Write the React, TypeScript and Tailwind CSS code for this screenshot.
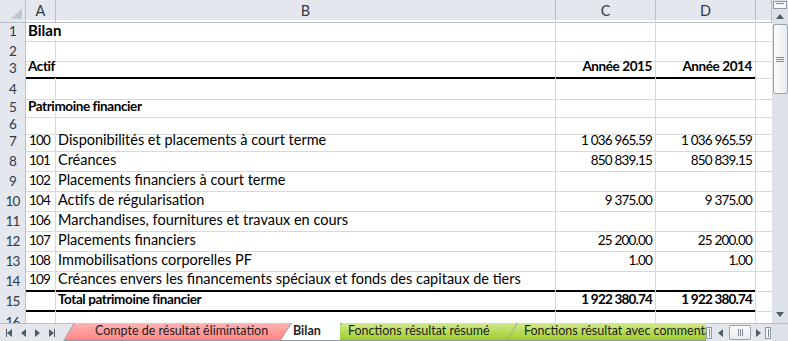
import React from 'react';

type RowDef = {
  n: number;
  h: string;
  a?: string;
  b?: string;
  c?: string;
  d?: string;
  span?: boolean;
  bold?: boolean;
  thick?: boolean;
  big?: boolean;
};

const rows: RowDef[] = [
  { n: 1, h: 'h-[20px]', a: 'Bilan', span: true, bold: true, big: true },
  { n: 2, h: 'h-[17px]' },
  { n: 3, h: 'h-[21px]', a: 'Actif', span: true, c: 'Année 2015', d: 'Année 2014', bold: true, thick: true },
  { n: 4, h: 'h-[18px]' },
  { n: 5, h: 'h-[17px]', a: 'Patrimoine financier', span: true, bold: true },
  { n: 6, h: 'h-[17px]' },
  { n: 7, h: 'h-[20px]', a: '100', b: 'Disponibilités et placements à court terme', c: '1 036 965.59', d: '1 036 965.59' },
  { n: 8, h: 'h-[20px]', a: '101', b: 'Créances', c: '850 839.15', d: '850 839.15' },
  { n: 9, h: 'h-[20px]', a: '102', b: 'Placements financiers à court terme' },
  { n: 10, h: 'h-[20px]', a: '104', b: 'Actifs de régularisation', c: '9 375.00', d: '9 375.00' },
  { n: 11, h: 'h-[20px]', a: '106', b: 'Marchandises, fournitures et travaux en cours' },
  { n: 12, h: 'h-[20px]', a: '107', b: 'Placements financiers', c: '25 200.00', d: '25 200.00' },
  { n: 13, h: 'h-[20px]', a: '108', b: 'Immobilisations corporelles PF', c: '1.00', d: '1.00' },
  { n: 14, h: 'h-[20px]', a: '109', b: 'Créances envers les financements spéciaux et fonds des capitaux de tiers', thick: true },
  { n: 15, h: 'h-[21px]', b: 'Total patrimoine financier', c: '1 922 380.74', d: '1 922 380.74', bold: true, thick: true },
  { n: 16, h: 'h-[20px]' },
];

const grid = 'grid grid-cols-[26px_30px_500px_100px_100px_1fr]';
const cellBase = 'flex items-end pb-[2px] leading-[18px] border-r border-[#d9d9d9] overflow-visible whitespace-nowrap';
// digits in Lato run wider than the sheet's font
const num = 'text-[13.5px] tracking-[-0.8px]';
const boldTxt = 'font-bold text-[13.5px] tracking-[-0.4px]';

function SheetRow({ r }: { r: RowDef }) {
  const bb = r.thick ? 'border-b-2 border-b-black' : 'border-b border-b-[#d9d9d9]';
  return (
    <div className={`${grid} ${r.h} shrink-0`}>
      <div className={`flex items-center justify-center pt-[1px] bg-[#e4e8ee] border-r border-b border-[#b9bfc8] text-[#2e3a48] ${num}`}>
        {r.n}
      </div>
      {r.span ? (
        <div className={`${cellBase} ${bb} col-span-2 pl-[2px] ${r.big ? 'font-bold text-[15px]' : boldTxt}`}>{r.a}</div>
      ) : (
        <>
          <div className={`${cellBase} ${bb} pl-[3px] ${num}`}>{r.a}</div>
          <div className={`${cellBase} ${bb} pl-[2px] ${r.bold ? boldTxt : ''}`}>{r.b}</div>
        </>
      )}
      <div className={`${cellBase} ${bb} justify-end pr-[3px] ${r.bold ? 'font-bold' : ''} ${r.n === 3 ? boldTxt : num}`}>{r.c}</div>
      <div className={`${cellBase} ${bb} justify-end pr-[3px] ${r.bold ? 'font-bold' : ''} ${r.n === 3 ? boldTxt : num}`}>{r.d}</div>
      <div className="border-b border-[#d9d9d9]"></div>
    </div>
  );
}

function Tri({ dir }: { dir: 'up' | 'down' | 'left' | 'right' }) {
  const pts = {
    up: '0,5 4,0 8,5',
    down: '0,0 8,0 4,5',
    left: '5,0 5,8 0,4',
    right: '0,0 0,8 5,4',
  }[dir];
  const vb = dir === 'up' || dir === 'down' ? '0 0 8 5' : '0 0 5 8';
  const size = dir === 'up' || dir === 'down' ? 'w-[8px] h-[5px]' : 'w-[5px] h-[8px]';
  return (
    <svg viewBox={vb} className={size}>
      <polygon points={pts} fill="#4f5a69" />
    </svg>
  );
}

function Grip({ vertical }: { vertical?: boolean }) {
  return vertical ? (
    <div className="flex flex-col gap-[1px]">
      <div className="w-[8px] h-[1px] bg-[#7f8996]" />
      <div className="w-[8px] h-[1px] bg-[#7f8996]" />
      <div className="w-[8px] h-[1px] bg-[#7f8996]" />
    </div>
  ) : (
    <div className="flex gap-[1px]">
      <div className="w-[1px] h-[7px] bg-[#7f8996]" />
      <div className="w-[1px] h-[7px] bg-[#7f8996]" />
      <div className="w-[1px] h-[7px] bg-[#7f8996]" />
    </div>
  );
}

function Tab({ label, cls, w, active }: { label: string; cls: string; w: string; active?: boolean }) {
  return (
    <div className={`${w} h-full shrink-0 -ml-[10px] first:ml-0 relative ${active ? 'z-10' : ''} bg-[#8e97a3] [clip-path:polygon(0_100%,11px_0,100%_0,100%_100%)]`}>
      <div className={`absolute inset-[0_0_1px_1px] ${cls} [clip-path:polygon(0_100%,11px_0,100%_0,100%_100%)] flex items-center pr-[4px] whitespace-nowrap ${active ? 'font-bold' : ''}`}>
        {label}
      </div>
    </div>
  );
}

export default function App() {
  return (
    <div className="w-[788px] h-[341px] overflow-hidden bg-white text-black text-[14.5px] font-['Lato','Liberation_Sans',sans-serif] flex flex-col">
      <div className="flex h-[323px]">
        <div className="flex-1 flex flex-col overflow-hidden">
          <div className={`${grid} h-[20px] shrink-0 bg-[#e4e8ee] text-[#2e3a48]`}>
            <div className="relative border-r border-b border-[#b9bfc8]">
              <svg viewBox="0 0 10 10" className="absolute right-[3px] bottom-[3px] w-[11px] h-[11px]">
                <polygon points="10,0 10,10 0,10" fill="#c2c7ce" />
              </svg>
            </div>
            {['A', 'B', 'C', 'D', ''].map((l, i) => (
              <div key={i} className="flex items-center justify-center border-r border-b border-[#b9bfc8]">
                {l}
              </div>
            ))}
          </div>
          {rows.map((r) => (
            <SheetRow key={r.n} r={r} />
          ))}
        </div>
        <div className="w-[16px] bg-[#dde2e9] flex flex-col items-center">
          <div className="mt-[1px] w-[14px] h-[8px] border border-[#8e98a5] bg-[#f7f8fa] flex items-start justify-center pt-[1px]">
            <div className="w-[8px] h-[1px] bg-[#7f8996]" />
          </div>
          <div className="h-[14px] flex items-center justify-center">
            <Tri dir="up" />
          </div>
          <div className="w-[15px] h-[70px] mt-[1px] rounded-[2px] border border-[#9aa3b0] bg-[linear-gradient(to_right,#fbfbfc,#e8ebef)] flex items-center justify-center">
            <Grip vertical />
          </div>
          <div className="flex-1" />
          <div className="h-[13px] flex items-start justify-center pt-[2px]">
            <Tri dir="down" />
          </div>
        </div>
      </div>
      <div className="flex h-[18px] bg-[#e3e7ec] border-t border-[#b9bfc8] text-[12.5px] text-[#1e1e1e]">
        <div className="w-[62px] shrink-0 flex items-center gap-[9px] pl-[6px]">
          <div className="flex items-center"><div className="w-[1px] h-[8px] bg-[#4f5a69]" /><Tri dir="left" /></div>
          <Tri dir="left" />
          <Tri dir="right" />
          <div className="flex items-center"><Tri dir="right" /><div className="w-[1px] h-[8px] bg-[#4f5a69]" /></div>
        </div>
        <div className="flex w-[644px] shrink-0 overflow-hidden -mt-[1px] pl-[1px]">
          <Tab label="Compte de résultat élimintation" w="w-[227px]" cls="bg-[linear-gradient(to_bottom,#ffb4b4,#ff8585)] pl-[31px]" />
          <Tab label="Bilan" w="w-[60px]" active cls="bg-white pl-[12px]" />
          <Tab label="Fonctions résultat résumé" w="w-[186px]" cls="bg-[linear-gradient(to_bottom,#d2ea8e,#9ccd2c)] pl-[17px]" />
          <Tab label="Fonctions résultat avec commentaires" w="w-[230px]" cls="bg-[linear-gradient(to_bottom,#d2ea8e,#9ccd2c)] pl-[17px]" />
        </div>
        <div className="w-[66px] shrink-0 flex items-center">
          <div className="w-[6px] h-[12px] border border-[#8e98a5] bg-[#f7f8fa] flex items-center justify-center">
            <div className="w-[1px] h-[8px] bg-[#7f8996]" />
          </div>
          <div className="w-[17px] flex justify-center"><Tri dir="left" /></div>
          <div className="w-[22px] h-[15px] rounded-[2px] border border-[#9aa3b0] bg-[linear-gradient(to_bottom,#fbfbfc,#e8ebef)] flex items-center justify-center">
            <Grip />
          </div>
          <div className="w-[14px] flex justify-center"><Tri dir="right" /></div>
          <div className="w-[6px] h-[12px] border border-[#8e98a5] bg-[#f7f8fa] flex items-center justify-center">
            <div className="w-[1px] h-[8px] bg-[#7f8996]" />
          </div>
        </div>
        <div className="flex-1 bg-[#dde2e9]" />
      </div>
    </div>
  );
}
